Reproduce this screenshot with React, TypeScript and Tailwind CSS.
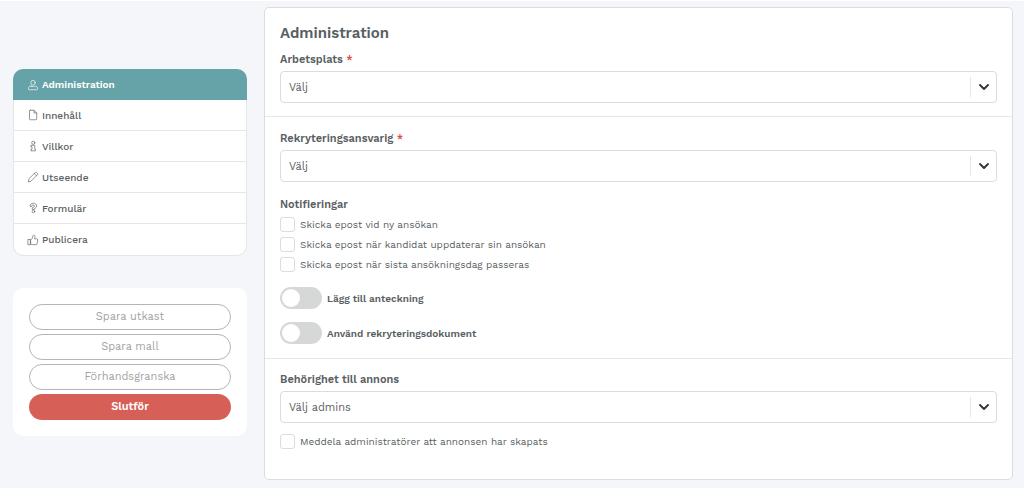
import React, { useState } from "react";

type IconName = "user" | "file" | "info" | "pen" | "question" | "thumb";

type MenuItem = {
  id: string;
  label: string;
  icon: IconName;
};

const MENU: MenuItem[] = [
  { id: "administration", label: "Administration", icon: "user" },
  { id: "innehall", label: "Innehåll", icon: "file" },
  { id: "villkor", label: "Villkor", icon: "info" },
  { id: "utseende", label: "Utseende", icon: "pen" },
  { id: "formular", label: "Formulär", icon: "question" },
  { id: "publicera", label: "Publicera", icon: "thumb" },
];

const NOTIFICATIONS = [
  { id: "ny", label: "Skicka epost vid ny ansökan" },
  { id: "uppdaterar", label: "Skicka epost när kandidat uppdaterar sin ansökan" },
  { id: "sista", label: "Skicka epost när sista ansökningsdag passeras" },
];

function MenuIcon({ name }: { name: IconName }) {
  return (
    <svg viewBox="0 0 20 20" className="size-[10px] shrink-0" fill="none" stroke="currentColor" strokeWidth="1.3" strokeLinejoin="round" strokeLinecap="round" overflow="visible" aria-hidden="true">
      {name === "user" && (
        <>
          <ellipse cx="10" cy="5.5" rx="4.4" ry="5" />
          <path d="M6.500 12.500H5c-2.500 0-4 1.500-4 4V18c0 1 .5 1.500 1.500 1.500h15c1 0 1.500-.5 1.500-1.500v-1.500c0-2.500-1.500-4-4-4h-1.500c-2 1-5 1-7 0z" />
        </>
      )}
      {name === "file" && (
        <>
          <path d="M4.500.5H12l5.500 5.500v12c0 .9-.6 1.500-1.500 1.500H4.500c-.9 0-1.500-.6-1.500-1.500V2C3 1.100 3.600.5 4.500.5z" />
          <path d="M12 .5V6h5.500" />
        </>
      )}
      {name === "info" && (
        <>
          <circle cx="10.500" cy="3.500" r="3.200" />
          <path d="M6.500 8.500h7v8H15v3.200H6v-3.200h2v-5H6.500z" />
        </>
      )}
      {name === "pen" && (
        <>
          <path d="M.8 19.200l1.400-6L13.500 2l1.300-1.200c.6-.6 1.500-.6 2.100 0l2.300 2.300c.6.6.6 1.500 0 2.100L18 6.500 6.800 17.800z" />
          <path d="M12.500 3l4.500 4.500" />
        </>
      )}
      {name === "question" && (
        <>
          <path d="M4 6C4 2.500 6.800.5 10.500.5c4 0 6.700 2 6.700 5.300 0 3-1.700 4.200-4.200 5.500v1.500H8.500V9.500c2.500-.8 4.500-1.500 4.500-3.500 0-1.200-1-2-2.500-2-1.400 0-2.200.7-2.500 2.200z" />
          <circle cx="10.800" cy="17" r="2.600" />
        </>
      )}
      {name === "thumb" && (
        <>
          <path d="M.5 9h4.800v10.500H.5z" />
          <path d="M5.300 10.200C8 8.500 9 6 9.300 3.500 9.500 1.500 10 .5 11.300.5c2 0 2.700 1.500 2.700 3.200 0 1.500-.5 2.800-1 4h4.500c1.300 0 2.200.9 2 2.200l-1.300 7.400c-.2 1.200-1 2-2.200 2H9.500c-1.700 0-2.700-.6-4.200-1.500z" />
        </>
      )}
    </svg>
  );
}

function SelectField({ id, label, placeholder, required }: { id: string; label: string; placeholder: string; required?: boolean }) {
  return (
    <div className="flex flex-col gap-[3px]">
      <label htmlFor={id} className="text-[11px] leading-4 font-semibold">
        {label} {required && <span className="text-[#e0483c]">*</span>}
      </label>
      <div className="relative">
        <select id={id} className="block h-8 w-full appearance-none rounded-[4px] border border-[#dcdcdc] bg-white pt-0.5 pr-10 pl-2 text-[11px] outline-none focus:border-[#66a3a8]">
          <option>{placeholder}</option>
        </select>
        <span className="pointer-events-none absolute inset-y-1.5 right-2 flex items-center gap-2 border-l border-[#e6e6e6] pl-2">
          <svg viewBox="0 0 10 6" className="h-[6px] w-[10px]" fill="none" stroke="#333" strokeWidth="1.8" strokeLinecap="round" strokeLinejoin="round" aria-hidden="true">
            <path d="M1 1l4 4 4-4" />
          </svg>
        </span>
      </div>
    </div>
  );
}

function CheckRow({ label }: { label: string }) {
  return (
    <label className="flex h-4 items-center gap-[5px] text-[10px]">
      <input type="checkbox" className="size-[15px] appearance-none rounded-[3px] border border-[#dcdcdc] bg-white checked:bg-[#66a3a8]" />
      {label}
    </label>
  );
}

function ToggleRow({ label }: { label: string }) {
  return (
    <label className="flex items-center gap-[5px] text-[10px] font-semibold">
      <input
        type="checkbox"
        role="switch"
        className="flex h-[22px] w-[42px] appearance-none items-center rounded-full bg-[#d5d8d7] px-0.5 before:size-[18px] before:rounded-full before:bg-white checked:justify-end checked:bg-[#66a3a8]"
      />
      {label}
    </label>
  );
}

export default function App() {
  const [active, setActive] = useState("administration");

  return (
    <div className="flex min-h-screen items-start gap-[17px] border-t border-white bg-[#f5f6fa] pt-1.5 pr-[11px] pb-2 pl-[13px] font-['Work_Sans',Inter,sans-serif] text-[#5a5f63]">
      <aside className="flex w-[234px] shrink-0 flex-col gap-8 pt-[62px]">
        <nav>
          {MENU.map((item) => (
            <button
              key={item.id}
              onClick={() => setActive(item.id)}
              className={
                active === item.id
                  ? "flex h-[31px] w-full items-center gap-1 bg-[#66a3a8] px-[15px] text-[10px] font-semibold text-white first:rounded-t-[10px] last:rounded-b-[10px]"
                  : "flex h-[31px] w-full items-center gap-1 border-x border-b border-[#e6e6e8] bg-white px-3.5 text-[10px] font-medium first:rounded-t-[10px] last:h-8 last:rounded-b-[10px]"
              }
            >
              <MenuIcon name={item.icon} />
              {item.label}
            </button>
          ))}
        </nav>

        <div className="flex flex-col gap-1 rounded-[10px] bg-white p-4 text-[11px]">
          <button className="h-[26px] rounded-full border border-[#b5b5b5] text-[#a3a3a3]">Spara utkast</button>
          <button className="h-[26px] rounded-full border border-[#b5b5b5] text-[#a3a3a3]">Spara mall</button>
          <button className="h-[26px] rounded-full border border-[#b5b5b5] text-[#a3a3a3]">Förhandsgranska</button>
          <button className="h-[26px] rounded-full bg-[#d66057] font-semibold text-white">Slutför</button>
        </div>
      </aside>

      <main className="min-w-0 flex-1 divide-y divide-[#e6e6e6] rounded-[5px] border border-[#dcdde0] bg-white">
        <section className="px-[15px] pt-[15px] pb-[13px]">
          <h1 className="mb-[9px] text-[15px] leading-5 font-semibold">Administration</h1>
          <SelectField id="arbetsplats" label="Arbetsplats" placeholder="Välj" required />
        </section>

        <section className="px-[15px] pt-[14px] pb-[14px]">
          <SelectField id="ansvarig" label="Rekryteringsansvarig" placeholder="Välj" required />
          <fieldset className="mt-[15px] flex flex-col gap-1">
            <legend className="mb-[3px] text-[11px] leading-4 font-semibold">Notifieringar</legend>
            {NOTIFICATIONS.map((n) => (
              <CheckRow key={n.id} label={n.label} />
            ))}
          </fieldset>
          <div className="mt-[15px] flex flex-col gap-[13px]">
            <ToggleRow label="Lägg till anteckning" />
            <ToggleRow label="Använd rekryteringsdokument" />
          </div>
        </section>

        <section className="px-[15px] pt-[13px] pb-[30px]">
          <SelectField id="behorighet" label="Behörighet till annons" placeholder="Välj admins" />
          <div className="mt-2.5">
            <CheckRow label="Meddela administratörer att annonsen har skapats" />
          </div>
        </section>
      </main>
    </div>
  );
}
